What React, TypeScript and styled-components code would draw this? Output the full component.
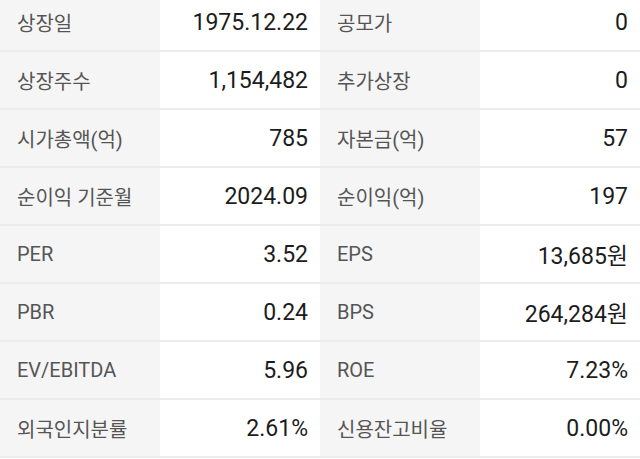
import React from "react";
import styled, { createGlobalStyle } from "styled-components";

const GlobalStyle = createGlobalStyle`
  html, body {
    margin: 0;
    padding: 0;
    background: #ffffff;
    overflow: hidden;
  }
`;

const Table = styled.div`
  margin-top: -6px;
  width: 640px;
  display: grid;
  grid-template-columns: repeat(4, 160px);
  font-family: Roboto, "Noto Sans CJK KR", sans-serif;
`;

const Cell = styled.div<{ $label?: boolean }>`
  height: 56px;
  border-bottom: 2px solid #ececec;
  display: flex;
  align-items: center;
  justify-content: ${({ $label }) => ($label ? "flex-start" : "flex-end")};
  padding: ${({ $label }) => ($label ? "0 0 0 17px" : "0 12px 0 0")};
  background: ${({ $label }) => ($label ? "#f5f5f5" : "#ffffff")};
  color: ${({ $label }) => ($label ? "#555555" : "#1c1c1c")};
  font-size: ${({ $label }) => ($label ? "20px" : "23px")};
  white-space: nowrap;
`;

type Item = [string, string];

const rows: [Item, Item][] = [
  [["상장일", "1975.12.22"], ["공모가", "0"]],
  [["상장주수", "1,154,482"], ["추가상장", "0"]],
  [["시가총액(억)", "785"], ["자본금(억)", "57"]],
  [["순이익 기준월", "2024.09"], ["순이익(억)", "197"]],
  [["PER", "3.52"], ["EPS", "13,685원"]],
  [["PBR", "0.24"], ["BPS", "264,284원"]],
  [["EV/EBITDA", "5.96"], ["ROE", "7.23%"]],
  [["외국인지분률", "2.61%"], ["신용잔고비율", "0.00%"]],
];

export default function App() {
  return (
    <>
      <GlobalStyle />
      <Table>
        {rows.map((row, i) =>
          row.map(([label, value], j) => (
            <React.Fragment key={`${i}-${j}`}>
              <Cell $label>{label}</Cell>
              <Cell>{value}</Cell>
            </React.Fragment>
          ))
        )}
      </Table>
    </>
  );
}
